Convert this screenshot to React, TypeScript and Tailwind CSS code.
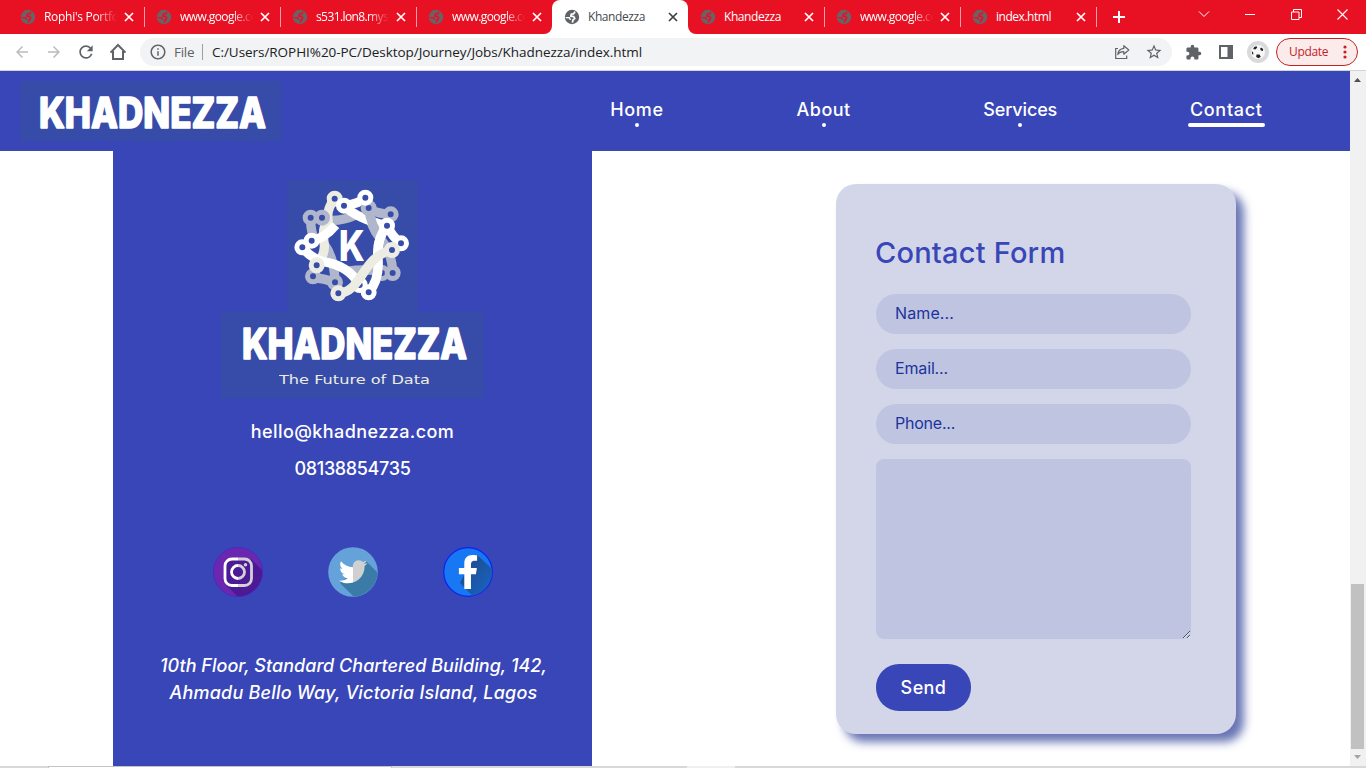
import { clsx } from "clsx";
import { FaFacebookF, FaTwitter } from "react-icons/fa";
import { MdArrowBack, MdArrowForward, MdExtension, MdRefresh, MdOutlineStarBorder, MdOutlineInfo } from "react-icons/md";

type Tab = { title: string; tracking: string; active?: boolean; divider?: boolean };

const tabs: Tab[] = [
  { title: "Rophi's Portfolio", tracking: "tracking-[-0.29px]", divider: true },
  { title: "www.google.com", tracking: "tracking-[-0.58px]", divider: true },
  { title: "s531.lon8.mysecure", tracking: "tracking-[-0.6px]", divider: true },
  { title: "www.google.com", tracking: "tracking-[-0.58px]" },
  { title: "Khandezza", tracking: "tracking-[-0.42px]", active: true },
  { title: "Khandezza", tracking: "tracking-[-0.42px]", divider: true },
  { title: "www.google.com", tracking: "tracking-[-0.58px]", divider: true },
  { title: "index.html", tracking: "tracking-[-0.47px]", divider: true },
];

function Globe({ active }: { active?: boolean }) {
  const cut = active ? "#ffffff" : "#e81123";
  return (
    <svg className="size-4 shrink-0" viewBox="0 0 16 16">
      <circle cx="8" cy="8" r="7.2" fill={active ? "#5f6368" : "#666468"} />
      <g fill="none" stroke={cut} strokeWidth="1.7" strokeLinecap="round" strokeLinejoin="round">
        <path d="M10.700 3.200 9.600 4.800 7.300 5.200 6.800 7.200 9.800 7.600 10.800 9.400 9 11 8.500 13" />
        <path d="M2.200 8.600 5.600 8.800 6.200 10.400" strokeWidth="1.400" />
      </g>
    </svg>
  );
}

function TabItem({ tab }: { tab: Tab }) {
  return (
    <div className={clsx("relative flex h-[34px] w-[136px] shrink-0 items-center pl-3", tab.active && "rounded-t-lg bg-white")}>
      {tab.active && (
        <>
          <svg className="absolute -left-2 bottom-0 size-2" viewBox="0 0 8 8" fill="#fff">
            <path d="M0 8a8 8 0 0 0 8-8v8z" />
          </svg>
          <svg className="absolute -right-2 bottom-0 size-2" viewBox="0 0 8 8" fill="#fff">
            <path d="M8 8a8 8 0 0 1-8-8v8z" />
          </svg>
        </>
      )}
      <Globe active={tab.active} />
      <div
        className={clsx(
          "ml-2 w-[73px] overflow-hidden whitespace-nowrap text-[12px] leading-4",
          tab.tracking,
          tab.active ? "text-[#45494d]" : "text-white",
          tab.title.length > 10 && "[mask-image:linear-gradient(to_right,black_52px,transparent_73px)]",
        )}
      >
        {tab.title}
      </div>
      <svg className="ml-[7px] size-[10px]" viewBox="0 0 10 10" fill="none" stroke={tab.active ? "#3c4043" : "#fff"} strokeWidth="1.7">
        <path d="m1 1 8 8M9 1 1 9" />
      </svg>
      {tab.divider && <div className="-mr-px ml-auto h-5 w-px bg-[#f6a0a7]" />}
    </div>
  );
}

function TitleBar() {
  return (
    <div className="flex h-[34px] bg-[#e81123] pl-2">
      {tabs.map((t, i) => (
        <TabItem key={i} tab={t} />
      ))}
      <svg className="ml-[17px] mt-[11px] size-3" viewBox="0 0 12 12" stroke="#fff" strokeWidth="2">
        <path d="M6 0v12M0 6h12" />
      </svg>
      <div className="ml-auto flex pt-[9px] pr-[17px] text-white">
        <svg className="mr-[35px] h-[11px] w-[12px]" viewBox="0 0 12 11" fill="none" stroke="currentColor">
          <path d="m1 2.500 5 5 5-5" />
        </svg>
        <svg className="mr-[36px] h-[11px] w-[10px]" viewBox="0 0 10 11" fill="none" stroke="currentColor">
          <path d="M0 5.500h10" />
        </svg>
        <svg className="mr-[35px] size-[11px]" viewBox="0 0 11 11" fill="none" stroke="currentColor">
          <path d="M.5 3h7.500v7.500h-7.500zM2.500 3v-2.500h8v8h-2.500" />
        </svg>
        <svg className="mr-px size-[11px]" viewBox="0 0 11 11" fill="none" stroke="currentColor" strokeWidth="1.100">
          <path d="m.5.5 10 10M10.500.5l-10 10" />
        </svg>
      </div>
    </div>
  );
}

function Toolbar() {
  return (
    <div className="flex h-[37px] items-center border-b border-[#d3d3d6] bg-white pl-[13px] text-[#5f6368]">
      <MdArrowBack className="size-[18px] text-[#babcbe]" />
      <MdArrowForward className="ml-[14px] size-[18px] text-[#babcbe]" />
      <MdRefresh className="ml-[13px] size-5" />
      <svg className="ml-[13px] size-[18px]" viewBox="0 0 18 18" fill="none" stroke="currentColor" strokeWidth="2">
        <path d="M1.500 9.600 9 2l7.500 7.600M4 8v8h10V8" />
      </svg>
      <div className="ml-[13px] flex h-7 w-[1032px] items-center rounded-full bg-[#f1f3f4] pl-[9px] pr-[9px]">
        <MdOutlineInfo className="size-[18px]" />
        <span className="ml-[7px] w-[22px] text-[13.5px] tracking-[-0.3px]">File</span>
        <div className="ml-[6px] h-4 w-px bg-[#9aa0a6]" />
        <span className="ml-[9px] whitespace-nowrap text-[13.5px] tracking-[-0.047px] text-[#202124]">
          C:/Users/ROPHI%20-PC/Desktop/Journey/Jobs/Khadnezza/index.html
        </span>
        <svg className="ml-auto size-4" viewBox="0 0 16 16" fill="none" stroke="currentColor" strokeWidth="1.200">
          <path d="M4 4.500H1.700v10h11v-3" />
          <path d="M9.800 4.400V1.700l5 4.300-5 4.200V7.600c-3 0-4.800.9-6 2.900.3-3.300 2.200-5.700 6-6.100z" strokeLinejoin="round" />
        </svg>
        <MdOutlineStarBorder className="ml-[15px] size-[18px]" />
      </div>
      <MdExtension className="ml-[13px] size-[17px]" />
      <svg className="ml-[17px] size-[14px]" viewBox="0 0 14 14">
        <path fillRule="evenodd" d="M0 0h14v14H0zM2 2v10h6.500V2z" fill="currentColor" />
      </svg>
      <svg className="ml-[14px] size-[22px]" viewBox="0 0 22 22">
        <circle cx="11" cy="11" r="11" fill="#d9dadb" />
        <circle cx="11" cy="11" r="7" fill="#f7f7f7" />
        <path d="m9.500 13.500 3 0 1.300 2.300-2.300 1.500-2.300-1.200zM7.200 6l2.300-.8.700 1.600-2 1.700-2-.5zM14 6.500l2.200 1.600-.3 2-2-.7-.8-1.700zM4.800 10.200l1.300 1 .3 2.300-1.200-.3z" fill="#222" />
      </svg>
      <div className="ml-[7px] flex h-7 w-[82px] items-center rounded-full border border-[#c5221f] bg-[#fbebeb] pl-3 pr-[10px]">
        <span className="text-[12px] tracking-[-0.35px] text-[#c5221f]">Update</span>
        <svg className="ml-auto h-[14px] w-[4px]" viewBox="0 0 4 14" fill="#c5221f">
          <circle cx="2" cy="2" r="1.600" />
          <circle cx="2" cy="7" r="1.600" />
          <circle cx="2" cy="12" r="1.600" />
        </svg>
      </div>
    </div>
  );
}

function Wordmark({ className }: { className?: string }) {
  return (
    <svg className={className} viewBox="0 0 229 35" fill="#fff" stroke="#fff" strokeWidth="1.600" strokeLinejoin="round">
      <text x="1" y="33.200" fontFamily="Inter" fontWeight="800" fontSize="43" textLength="227" lengthAdjust="spacingAndGlyphs">
        KHADNEZZA
      </text>
    </svg>
  );
}

const nav = [
  { label: "Home", cls: "w-[54px] tracking-[0.7px]" },
  { label: "About", cls: "w-[54px] tracking-[0.45px]" },
  { label: "Services", cls: "w-[74px] tracking-[-0.12px]" },
  { label: "Contact", cls: "w-[73px] tracking-[0.7px]", current: true },
];

function SiteHeader() {
  return (
    <header className="flex h-20 items-start bg-[#3946b8] pl-5 font-[Inter] text-white">
      <div className="mt-[10px] flex h-[60px] w-[261px] bg-[#374ca9] pl-[18px] pt-[14px]">
        <Wordmark className="h-[35px] w-[229px]" />
      </div>
      <nav className="ml-[329px] mt-[26px] flex gap-x-[132.600px] text-[18px] font-medium leading-[26px]">
        {nav.map((n) => (
          <a key={n.label} className={clsx("flex flex-col items-center whitespace-nowrap", n.cls)}>
            <span>{n.label}</span>
            <span className={clsx("h-1 shrink-0 rounded-full bg-white", n.current ? "w-[77px]" : "w-1")} />
          </a>
        ))}
      </nav>
    </header>
  );
}

const CREAM = "#ecece3";
const WHITE = "#ffffff";
const GRAY = "#b0b6cb";
const BG = "#374ca9";

function Node({ x, y, c }: { x: number; y: number; c: string }) {
  return <circle cx={x} cy={y} r="16.500" fill={BG} stroke={c} strokeWidth="15" />;
}

function Emblem() {
  return (
    <svg className="h-[132px] w-[131px]" viewBox="232 30 393 396" fill="none" strokeWidth="28">
      <rect x="232" y="30" width="393" height="396" fill={BG} />
      <g stroke={GRAY}>
        <path d="M303 143Q302 190 318 212M337 148Q388 158 440 134M477 118Q508 132 543 133M477 114Q480 170 515 210Q548 250 549 309" />
        <path d="M310 323Q342 325 376 337M345 225Q374 262 376 337M517 305Q470 295 415 303M549 309H517" />
      </g>
      <g stroke={CREAM}>
        <path d="M375 86Q350 118 355 150Q335 170 344 225Q346 255 321 286" />
      </g>
      <Node x={376} y={337} c={GRAY} />
      <Node x={517} y={309} c={GRAY} />
      <g stroke={WHITE}>
        <path d="M467 83Q448 102 403 107Q440 145 532 167Q548 200 574 220M278 232Q294 215 306 212Q345 205 378 165" />
        <path d="M278 232Q300 262 340 275Q415 285 450 345M532 167Q500 205 505 265Q510 330 477 367" />
      </g>
      <path d="M477 114Q484 170 512 200" stroke={GRAY} />
      <path d="M532 167Q500 205 505 265" stroke={WHITE} />
      <Node x={450} y={345} c={WHITE} />
      <path d="M386 370C460 365 455 260 547 240" stroke={CREAM} />
      <Node x={375} y={86} c={CREAM} />
      <Node x={303} y={143} c={GRAY} />
      <Node x={337} y={143} c={GRAY} />
      <Node x={477} y={114} c={GRAY} />
      <Node x={543} y={133} c={GRAY} />
      <Node x={549} y={309} c={GRAY} />
      <Node x={310} y={319} c={GRAY} />
      <Node x={403} y={107} c={WHITE} />
      <Node x={467} y={83} c={WHITE} />
      <Node x={532} y={167} c={WHITE} />
      <Node x={574} y={220} c={WHITE} />
      <Node x={306} y={212} c={WHITE} />
      <Node x={278} y={232} c={WHITE} />
      <Node x={477} y={367} c={WHITE} />
      <Node x={321} y={286} c={CREAM} />
      <Node x={386} y={370} c={CREAM} />
      <Node x={547} y={240} c={CREAM} />
      <text x="387" y="274" fontFamily="Inter" fontWeight="800" fontSize="127" textLength="78" lengthAdjust="spacingAndGlyphs" fill="#fff">
        K
      </text>
    </svg>
  );
}

function Instagram() {
  return (
    <svg className="size-[50px]" viewBox="0 0 50 50">
      <defs>
        <clipPath id="ig-disc"><circle cx="25" cy="25" r="24.500" /></clipPath>
        <linearGradient id="ig-split"><stop offset=".5" stopColor="#fff" /><stop offset=".5" stopColor="#d3d0d8" /></linearGradient>
      </defs>
      <circle cx="25" cy="25" r="24.500" fill="#6c27b0" />
      <path d="M38 12 60 34V60H35L12 37z" fill="#4c1a94" clipPath="url(#ig-disc)" />
      <rect x="12" y="12" width="26.500" height="26.500" rx="7" fill="#4c1a94" stroke="url(#ig-split)" strokeWidth="2.800" />
      <circle cx="25" cy="25" r="6.500" fill="none" stroke="url(#ig-split)" strokeWidth="2.800" />
      <circle cx="32.500" cy="17.800" r="1.700" fill="#d3d0d8" />
      <circle cx="25" cy="25" r="24.600" fill="none" stroke="#4a25c4" strokeWidth=".8" />
    </svg>
  );
}

function Twitter() {
  return (
    <svg className="size-[50px]" viewBox="0 0 50 50">
      <defs>
        <clipPath id="tw-disc"><circle cx="25" cy="25" r="24.500" /></clipPath>
        <clipPath id="tw-left"><rect width="25" height="50" /></clipPath>
        <clipPath id="tw-right"><rect x="25" width="25" height="50" /></clipPath>
      </defs>
      <circle cx="25" cy="25" r="24.800" fill="#65a2d9" />
      <path d="M38 14 60 36V60H36L12 36z" fill="#3b7ba7" clipPath="url(#tw-disc)" />
      <g clipPath="url(#tw-left)"><FaTwitter x="11" y="10.500" size={28.5} color="#fff" /></g>
      <g clipPath="url(#tw-right)"><FaTwitter x="11" y="10.500" size={28.5} color="#d0d0d0" /></g>
    </svg>
  );
}

function Facebook() {
  return (
    <svg className="size-[50px]" viewBox="0 0 50 50">
      <defs>
        <clipPath id="fb-disc"><circle cx="25" cy="25" r="24" /></clipPath>
        <linearGradient id="fb-shade" x1="0" y1="0" x2="1" y2="1"><stop offset=".2" stopColor="#1d4f92" /><stop offset=".8" stopColor="#1867cd" /></linearGradient>
      </defs>
      <circle cx="25" cy="25" r="24.300" fill="#1877f2" stroke="#0a22f5" strokeWidth="1.200" />
      <path d="M34 8 60 32V60H40L17 36 22 26z" fill="url(#fb-shade)" clipPath="url(#fb-disc)" />
      <FaFacebookF x="8" y="8" size={34} color="#fff" />
    </svg>
  );
}

function ContactPanel() {
  return (
    <section className="ml-[113px] flex h-[615px] w-[479px] flex-col items-center bg-[#3946b8] pt-[29px] font-[Inter] text-[18px] font-medium leading-[27px] text-white">
      <Emblem />
      <div className="flex h-[86px] w-[263px] flex-col items-center bg-[#374ca9] pl-[3px] pt-[14px]">
        <Wordmark className="h-[35px] w-[227px]" />
        <svg className="mt-[9px] h-[18px] w-[151px]" viewBox="0 0 151 18">
          <text x="0" y="14" fontFamily="DejaVu Sans" fontSize="13" textLength="151" lengthAdjust="spacingAndGlyphs" fill="#ecece3">
            The Future of Data
          </text>
        </svg>
      </div>
      <p className="mt-[20px] tracking-[0.42px]">hello@khadnezza.com</p>
      <p className="mt-[10px] tracking-[-0.35px]">08138854735</p>
      <div className="mt-[65px] flex gap-[65px]">
        <Instagram />
        <Twitter />
        <Facebook />
      </div>
      <p className="mt-[55px] pl-0.5 text-center italic">
        <span className="block tracking-[0.03px]">10th Floor, Standard Chartered Building, 142,</span>
        <span className="block tracking-[0.2px]">Ahmadu Bello Way, Victoria Island, Lagos</span>
      </p>
    </section>
  );
}

function ContactForm() {
  const field = "h-10 w-[315px] rounded-[20px] bg-[#bfc4e1] px-[19px] pb-0.5 text-[16px] text-[#1b349c] outline-none placeholder:text-[#1b349c] placeholder:opacity-100";
  return (
    <form className="ml-[244px] mt-[33px] flex h-[550px] w-[400px] flex-col items-start rounded-[20px] bg-[#d3d6e9] pl-10 pt-[49px] font-[Inter] shadow-[8px_8px_10px_#6976b4]">
      <h1 className="-ml-px text-[29px] font-medium leading-10 tracking-[0.2px] text-[#3946b8]">Contact Form</h1>
      <input className={clsx(field, "mt-[21px] tracking-[0.11px]")} placeholder="Name..." />
      <input className={clsx(field, "mt-[15px] tracking-[-0.15px]")} placeholder="Email..." />
      <input className={clsx(field, "mt-[15px] tracking-[-0.23px]")} placeholder="Phone..." />
      <textarea className="mt-[15px] block h-[180px] w-[315px] resize rounded-lg bg-[#bfc4e1] outline-none" />
      <button type="button" className="mt-[25px] h-[47px] w-[95px] rounded-[23px] bg-[#3946b8] text-[18px] font-medium tracking-[0.4px] text-white">
        Send
      </button>
    </form>
  );
}

function Scrollbar() {
  return (
    <div className="flex h-[695px] w-4 flex-col items-center bg-[#f1f1f1] pr-px pt-[7px]">
      <svg className="h-1 w-[7px]" viewBox="0 0 7 4" fill="#505050"><path d="M3.500 0 7 4H0z" /></svg>
      <div className="mt-[502px] h-[165px] w-[13px] bg-[#c1c1c1]" />
      <svg className="mt-[6px] h-1 w-[7px]" viewBox="0 0 7 4" fill="#a3a3a3"><path d="M0 0h7L3.500 4z" /></svg>
    </div>
  );
}

export default function App() {
  return (
    <div className="h-[768px] w-[1366px] overflow-hidden bg-white font-['Open_Sans',sans-serif]">
      <TitleBar />
      <Toolbar />
      <div className="flex">
        <div className="h-[695px] w-[1350px]">
          <SiteHeader />
          <main className="flex items-start">
            <ContactPanel />
            <ContactForm />
          </main>
        </div>
        <Scrollbar />
      </div>
      <div className="flex h-0.5 bg-[#d8d8d8]">
        <div className="ml-12 w-[344px] border-x border-t border-[#c4c4c4] bg-white" />
        <div className="ml-[295px] w-12 bg-[#efefef]" />
      </div>
    </div>
  );
}
